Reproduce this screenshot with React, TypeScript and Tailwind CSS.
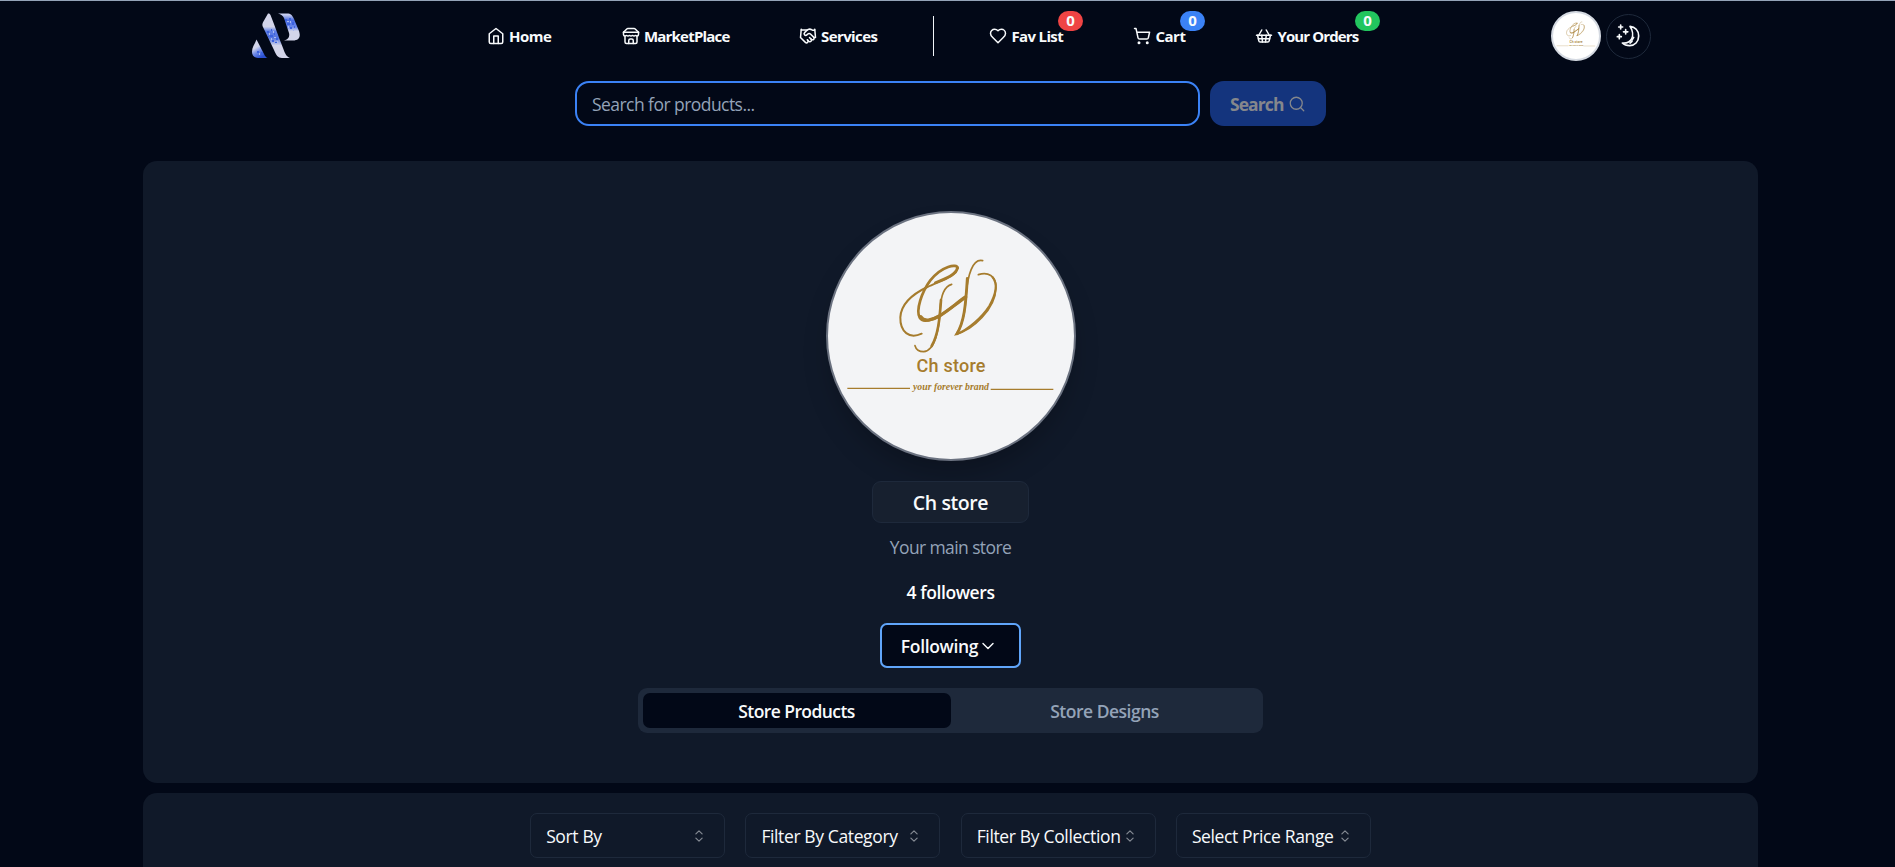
import React from "react";
import { ChevronDown, Handshake, Search, ShoppingBasket, ShoppingCart } from "lucide-react";

type IconProps = { className?: string };

function Stroke({ className, children }: IconProps & { children: React.ReactNode }) {
  return (
    <svg viewBox="0 0 24 24" fill="none" stroke="currentColor" strokeWidth="2" strokeLinecap="round" strokeLinejoin="round" className={className}>
      {children}
    </svg>
  );
}

const HomeIcon = ({ className }: IconProps) => (
  <Stroke className={className}>
    <path d="m3 9 9-7 9 7v11a2 2 0 0 1-2 2H5a2 2 0 0 1-2-2z" />
    <path d="M9 22V12h6v10" />
  </Stroke>
);

const StoreIcon = ({ className }: IconProps) => (
  <Stroke className={className}>
    <path d="m2 7 4.41-4.41A2 2 0 0 1 7.83 2h8.34a2 2 0 0 1 1.42.59L22 7" />
    <path d="M4 12v8a2 2 0 0 0 2 2h12a2 2 0 0 0 2-2v-8" />
    <path d="M15 22v-4a2 2 0 0 0-2-2h-2a2 2 0 0 0-2 2v4" />
    <path d="M2 7h20" />
    <path d="M22 7v3a2 2 0 0 1-2 2a2.7 2.7 0 0 1-1.59-.63.7.7 0 0 0-.82 0A2.7 2.7 0 0 1 16 12a2.7 2.7 0 0 1-1.59-.63.7.7 0 0 0-.82 0A2.7 2.7 0 0 1 12 12a2.7 2.7 0 0 1-1.59-.63.7.7 0 0 0-.82 0A2.7 2.7 0 0 1 8 12a2.7 2.7 0 0 1-1.59-.63.7.7 0 0 0-.82 0A2.7 2.7 0 0 1 4 12a2 2 0 0 1-2-2V7" />
  </Stroke>
);

const HeartIcon = ({ className }: IconProps) => (
  <Stroke className={className}>
    <path d="M19 14c1.49-1.46 3-3.21 3-5.5A5.5 5.5 0 0 0 16.5 3c-1.76 0-3 .5-4.5 2-1.5-1.5-2.74-2-4.5-2A5.5 5.5 0 0 0 2 8.5c0 2.3 1.5 4.05 3 5.5l7 7Z" />
  </Stroke>
);

const SortIcon = ({ className }: IconProps) => (
  <svg viewBox="0 0 15 15" fill="none" stroke="currentColor" strokeWidth="1" strokeLinecap="round" strokeLinejoin="round" className={className}>
    <path d="M4.900 5.700 7.500 3.200 10.100 5.700M4.900 9.300 7.500 11.800 10.100 9.300" />
  </svg>
);

const MoonIcon = ({ className }: IconProps) => (
  <svg viewBox="0 0 66 66" fill="none" stroke="currentColor" strokeLinecap="round" strokeLinejoin="round" className={className}>
    <path d="M36 4C51 6 62 17 62 33C62 50 50 62 35 62C26 62 18 59 13 54C26 55 36 51 41 42C46 32 44 16 36 4Z" strokeWidth="5" />
    <path d="M42 45l5-8M36 54l6-5" strokeWidth="5" />
    <path d="M8 0v12M2 6h12M23 14v13M16.500 20.500h13M4 29v12M-2 35h12" strokeWidth="5" />
  </svg>
);

function BrandLogo() {
  return (
    <svg viewBox="0 0 48 46" className="h-[46px] w-12">
      <defs>
        <linearGradient id="stem" x1="0" y1="0" x2="0" y2="1">
          <stop offset="0.3" stopColor="#d3d5ea" />
          <stop offset="0.4" stopColor="#5f7fe6" />
          <stop offset="0.55" stopColor="#5474df" />
          <stop offset="0.72" stopColor="#d3d5ea" />
        </linearGradient>
        <linearGradient id="bowl" x1="0" y1="0" x2="0" y2="1">
          <stop offset="0.05" stopColor="#c6cdf0" />
          <stop offset="0.25" stopColor="#4a6ce0" />
          <stop offset="0.5" stopColor="#6c88ea" />
          <stop offset="0.65" stopColor="#d3d5ea" />
        </linearGradient>
        <linearGradient id="foot" x1="0" y1="0" x2="0.5" y2="1">
          <stop offset="0.45" stopColor="#d3d5ea" />
          <stop offset="0.7" stopColor="#6d89e8" />
          <stop offset="1" stopColor="#2b50d0" />
        </linearGradient>
      </defs>
      <path d="M16 .5C17 .2 18 .7 18.500 2C23 13 27 25 31 35C33 41 35 44 38 45H30C26 45 24 42 22 37L10.500 13C10 11 11 9 12 7.500Z" fill="url(#stem)" />
      <path d="M26 .5H35C39 .5 40 2 42 6L47 18C49 24 47 27.500 41 27.500H32C36 26.500 38 24 37 20L32 5C31 2.500 29 1.500 26 .5Z" fill="url(#bowl)" />
      <path d="M4.500 26.500L12 41C13 43 14 44.500 15.500 45H6C2 45 0 42 0 39C0 34 3 31 4.500 26.500Z" fill="url(#foot)" />
      <g fill="#3c62df">
        <path d="M15 18h2v2h-2zM19 16h1v2h-1zM18 22h3v2h-3zM22 20h1v2h-1zM20 27h2v2h-2zM24 25h2v2h-2zM23 29h2v1h-2zM16 23h1v1h-1zM33 6h2v2h-2zM37 5h2v2h-2zM35 10h3v2h-3zM40 9h2v3h-2zM38 14h2v2h-2zM42 13h1v2h-1zM5 38h2v2h-2zM9 39h2v3h-2z" />
      </g>
      <g fill="#a9baf2">
        <path d="M17 20h1v2h-1zM21 18h1v2h-1zM22 24h2v1h-2zM19 25h1v2h-1zM25 28h1v2h-1zM35 8h2v1h-2zM38 8h1v2h-1zM36 13h1v2h-1zM41 16h1v2h-1zM7 40h1v2h-1z" />
      </g>
    </svg>
  );
}

function StoreEmblem({ className }: IconProps) {
  return (
    <svg viewBox="0 0 246 246" className={className}>
      <g transform="translate(-8 -13) scale(.33333)" fill="none" stroke="#a67c2d" strokeLinecap="round">
        <path d="M305 401C268 418 240 396 241 352C243 312 276 283 322 261C362 242 412 228 413 204" strokeWidth="6" />
        <path d="M413 204C411 190 366 197 331 241C305 276 287 330 299 353C309 371 342 357 358 348C386 331 412 308 437 291" strokeWidth="8" />
        <path d="M302 350C313 370 342 357 358 348C386 331 412 308 437 291" strokeWidth="10" />
        <path d="M346 248C376 236 411 222 412 203" strokeWidth="8" />
        <path d="M395 253C372 259 362 292 360 330C358 380 347 452 311 455C297 455 288 448 285 437" strokeWidth="5" />
        <path d="M363 300C359 360 354 405 335 438" strokeWidth="8" />
        <path d="M488 182C457 174 443 229 439 280C436 327 431 372 408 403C458 390 526 328 528 264C529 226 503 215 475 224" strokeWidth="5" />
        <path d="M442 235C437 320 432 366 411 401" strokeWidth="8.500" />
        <path d="M411 402C445 388 486 352 508 318C528 282 533 250 518 232" strokeWidth="6.500" />
        <path d="M82 565H270M512 568H700" strokeWidth="4" strokeLinecap="butt" />
      </g>
      <g fill="#a67c2d">
        <text x="88.500" y="158.500" fontSize="18" fontWeight="500" fontFamily="Roboto, sans-serif" textLength="69" lengthAdjust="spacing">Ch store</text>
        <text x="85" y="176.500" fontSize="11" fontStyle="italic" fontWeight="700" fontFamily="Liberation Serif, serif" textLength="76" lengthAdjust="spacingAndGlyphs">your forever brand</text>
      </g>
    </svg>
  );
}

const navText = "whitespace-nowrap text-[15px] font-bold";
const navItem = "flex shrink-0 items-center gap-[4.5px]";
const badge = "absolute top-[-14px] flex h-5 w-[25px] items-center justify-center rounded-full text-[15px] leading-none font-bold";

function Header() {
  return (
    <header className="flex h-[71px] items-center border-t border-[#94a3b8] pl-[252px] text-[#f8fafc]">
      <div className="w-[234.500px] shrink-0"><BrandLogo /></div>
      <a className={navItem + " w-[135px]"}><HomeIcon className="size-[18px]" /><span className={navText + " tracking-[-0.5px]"}>Home</span></a>
      <a className={navItem + " w-[177px]"}><StoreIcon className="size-[18px]" /><span className={navText + " tracking-[-0.8px]"}>MarketPlace</span></a>
      <a className={navItem + " w-[134.500px]"}><Handshake className="size-[18px]" /><span className={navText + " tracking-[-0.6px]"}>Services</span></a>
      <div className="mr-[55px] h-10 w-px shrink-0 bg-[#f1f5f9]" />
      <a className={navItem + " relative w-[144px]"}>
        <HeartIcon className="size-[18px]" /><span className={navText + " tracking-[-0.65px]"}>Fav List</span>
        <span className={badge + " left-[69px] bg-[#ef4444]"}>0</span>
      </a>
      <a className={navItem + " relative w-[122px]"}>
        <ShoppingCart className="size-[18px]" /><span className={navText + " tracking-[-0.5px]"}>Cart</span>
        <span className={badge + " left-[47px] bg-[#3b82f6]"}>0</span>
      </a>
      <a className={navItem + " relative w-[296px]"}>
        <ShoppingBasket className="size-[18px]" /><span className={navText + " tracking-[-0.9px]"}>Your Orders</span>
        <span className={badge + " left-[100px] bg-[#22c55e]"}>0</span>
      </a>
      <div className="flex size-[50px] shrink-0 items-center justify-center overflow-hidden rounded-full border-2 border-[#d5dae2] bg-white">
        <StoreEmblem className="size-[46px]" />
      </div>
      <button className="ml-[5px] flex size-[45px] shrink-0 items-center justify-center rounded-full border border-[#1e293b]">
        <MoonIcon className="size-[22px] overflow-visible" />
      </button>
    </header>
  );
}

function SearchBar() {
  return (
    <div className="mt-[10px] flex h-[45px] gap-[10px] pl-[575px]">
      <div className="flex w-[625px] items-center rounded-[14px] border-2 border-[#3b82f6] pt-px pl-[15px] text-[17.5px] tracking-[-0.55px] text-[#94a3b8]">
        Search for products...
      </div>
      <button className="flex w-[116px] items-center justify-center gap-[4.5px] rounded-[14px] bg-[#14347d] text-[#85878c]">
        <span className="pt-px text-[17.5px] font-bold tracking-[-0.9px]">Search</span>
        <Search className="size-[18px]" strokeWidth={1.7} />
      </button>
    </div>
  );
}

function Profile() {
  return (
    <section className="mt-[35px] flex h-[622px] flex-col items-center rounded-[14px] bg-[#101929] pt-[50px]">
      <div className="size-[250px] shrink-0 rounded-full border-2 border-[#6b7280] bg-[#f3f4f6] shadow-[0_16px_28px_-6px_rgba(0,0,0,0.25)]">
        <StoreEmblem className="size-[246px]" />
      </div>
      <h1 className="mt-5 flex h-[42px] w-[157px] items-center justify-center rounded-[9px] border border-[#1e293b] bg-[#17202f] pt-[2px] text-[19.5px] font-semibold tracking-[-0.4px] text-[#f8fafc]">Ch store</h1>
      <p className="mt-[9.500px] h-[27px] text-[17.5px] leading-[28px] tracking-[-0.6px] text-[#94a3b8]">Your main store</p>
      <p className="mt-[18px] h-[27px] text-[17.5px] leading-[28px] font-semibold tracking-[-0.4px] text-white">4 followers</p>
      <button className="mt-[18.500px] flex h-[45px] w-[141px] items-center justify-center rounded-[7px] border-2 border-[#60a5fa] bg-[#020817] pr-[2px] text-[#f8fafc]">
        <span className="pt-px text-[17.5px] font-semibold tracking-[-0.35px]">Following</span>
        <ChevronDown className="size-[20px]" strokeWidth={1.7} />
      </button>
      <div className="mt-5 flex h-[45px] w-[625px] items-center rounded-[9px] bg-[#1e293b] p-[4.5px] text-[17.5px] font-semibold">
        <div className="flex h-[35px] w-[308px] items-center justify-center rounded-[7px] bg-[#020817] pt-px tracking-[-0.58px] text-[#f8fafc]">Store Products</div>
        <div className="flex h-[35px] w-[308px] items-center justify-center pt-px tracking-[-0.5px] text-[#94a3b8]">Store Designs</div>
      </div>
    </section>
  );
}

const filters = [
  { label: "Sort By", tracking: "tracking-[-0.36px]" },
  { label: "Filter By Category", tracking: "tracking-[-0.38px]" },
  { label: "Filter By Collection", tracking: "tracking-[-0.34px]" },
  { label: "Select Price Range", tracking: "tracking-[-0.37px]" },
];

function Filters() {
  return (
    <section className="mt-[10px] flex h-[120px] justify-center gap-[20.25px] rounded-t-[14px] bg-[#101929] pt-5">
      {filters.map((f) => (
        <button key={f.label} className="flex h-[45px] w-[195px] items-center justify-between rounded-[7px] border border-[#1e293b] pr-4 pl-[15px] text-[17.5px] text-[#f8fafc]">
          <span className={"pt-px whitespace-nowrap " + f.tracking}>{f.label}</span>
          <SortIcon className="size-[18px] shrink-0 opacity-50" />
        </button>
      ))}
    </section>
  );
}

export default function App() {
  return (
    <div className="h-[867px] overflow-hidden bg-[#020817] font-['Open_Sans',sans-serif]">
      <Header />
      <SearchBar />
      <main className="ml-[143px] w-[1615px]">
        <Profile />
        <Filters />
      </main>
    </div>
  );
}
